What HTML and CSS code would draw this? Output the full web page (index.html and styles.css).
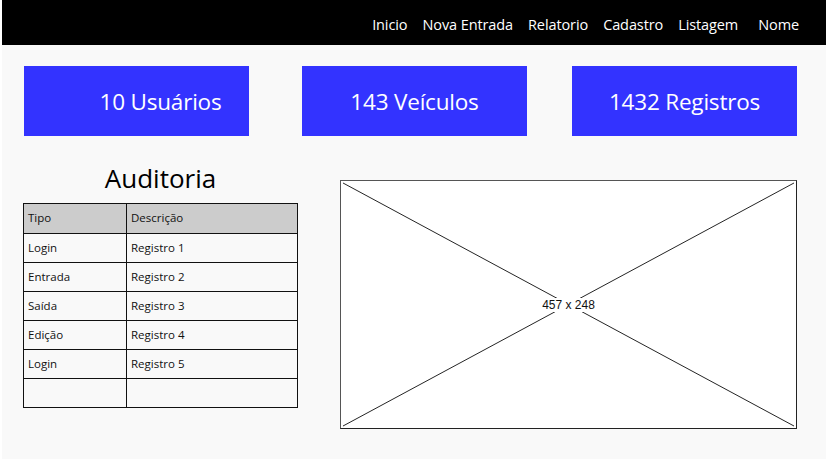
FILE: index.html
```html
<!DOCTYPE html>
<html lang="pt">
<head>
<meta charset="utf-8">
<title>Dashboard</title>
<link rel="stylesheet" href="styles.css">
</head>
<body>
<div class="page">
  <nav class="nav">
    <a class="nav-item">Inicio</a>
    <a class="nav-item">Nova Entrada</a>
    <a class="nav-item">Relatorio</a>
    <a class="nav-item">Cadastro</a>
    <a class="nav-item">Listagem</a>
    <a class="nav-item nav-last">Nome</a>
  </nav>
  <section class="cards">
    <div class="card card-first">10 Usuários</div>
    <div class="card card-second">143 Veículos</div>
    <div class="card">1432 Registros</div>
  </section>
  <section class="main">
    <div class="audit">
      <h2 class="audit-title">Auditoria</h2>
      <table class="audit-table">
        <thead>
          <tr><th class="col-type">Tipo</th><th>Descrição</th></tr>
        </thead>
        <tbody>
          <tr><td>Login</td><td>Registro 1</td></tr>
          <tr><td>Entrada</td><td>Registro 2</td></tr>
          <tr><td>Saída</td><td>Registro 3</td></tr>
          <tr><td>Edição</td><td>Registro 4</td></tr>
          <tr><td>Login</td><td>Registro 5</td></tr>
          <tr><td></td><td></td></tr>
        </tbody>
      </table>
    </div>
    <div class="placeholder">
      <svg class="ph-lines" viewBox="0 0 457 249" preserveAspectRatio="none">
        <line x1="2" y1="2" x2="455" y2="247" stroke="#222" stroke-width="1"/>
        <line x1="455" y1="2" x2="2" y2="247" stroke="#222" stroke-width="1"/>
      </svg>
      <span class="ph-label">457 x 248</span>
    </div>
  </section>
</div>
</body>
</html>
```
FILE: styles.css
```css
* { box-sizing: border-box; }
html, body { margin: 0; padding: 0; background: #ffffff; }
body {
  font-family: "Open Sans", "Noto Sans", sans-serif;
  color: #111;
}
.page {
  margin: 0 3px 2px 2px;
  height: 459px;
  background: #f9f9f9;
  display: flex;
  flex-direction: column;
}
.nav {
  height: 45px;
  background: #000;
  display: flex;
  justify-content: flex-end;
  align-items: center;
  padding-right: 27px;
  padding-top: 4px;
  gap: 15px;
}
.nav-item {
  color: #fff;
  font-size: 14.5px;
  letter-spacing: -0.1px;
  text-decoration: none;
}
.nav-last { margin-left: 5px; }
.cards {
  display: flex;
  padding: 21px 0 0 22px;
  gap: 45px;
}
.card {
  width: 225px;
  height: 70px;
  background: #3333ff;
  color: #fff;
  font-size: 22.5px;
  display: flex;
  align-items: center;
  justify-content: center;
  letter-spacing: -0.2px;
}
.card-first { padding-left: 48px; }
.card-second { margin-left: 8px; }
.main {
  display: flex;
  padding: 0 0 0 21px;
  margin-top: 24px;
}
.audit {
  width: 275px;
  display: flex;
  flex-direction: column;
  align-items: center;
}
.audit-title {
  margin: 3px 0 10px 0;
  font-size: 26px;
  font-weight: 400;
  line-height: 30px;
  color: #000;
}
.audit-table {
  width: 275px;
  border-collapse: collapse;
  font-size: 11.5px;
}
.audit-table th, .audit-table td {
  border: 1px solid #111;
  height: 29px;
  padding: 0 0 2px 4px;
  text-align: left;
  font-weight: 400;
}
.audit-table th { background: #cccccc; height: 30px; }
.audit-table td { background: #f9f9f9; }
.col-type { width: 103px; }
.placeholder {
  position: relative;
  margin-left: 42px;
  margin-top: 20px;
  width: 457px;
  height: 249px;
  background: #fff;
  border: 1px solid #555;
  border-bottom-color: #222;
  border-right-color: #222;
}
.ph-lines {
  position: absolute;
  inset: 0;
  width: 100%;
  height: 100%;
}
.ph-label {
  position: absolute;
  left: 50%;
  top: 50%;
  transform: translate(-50%, -50%);
  background: #fff;
  padding: 0 4px;
  font-family: "Liberation Sans", Arial, sans-serif;
  font-size: 12px;
  color: #111;
  line-height: 14px;
}
```
